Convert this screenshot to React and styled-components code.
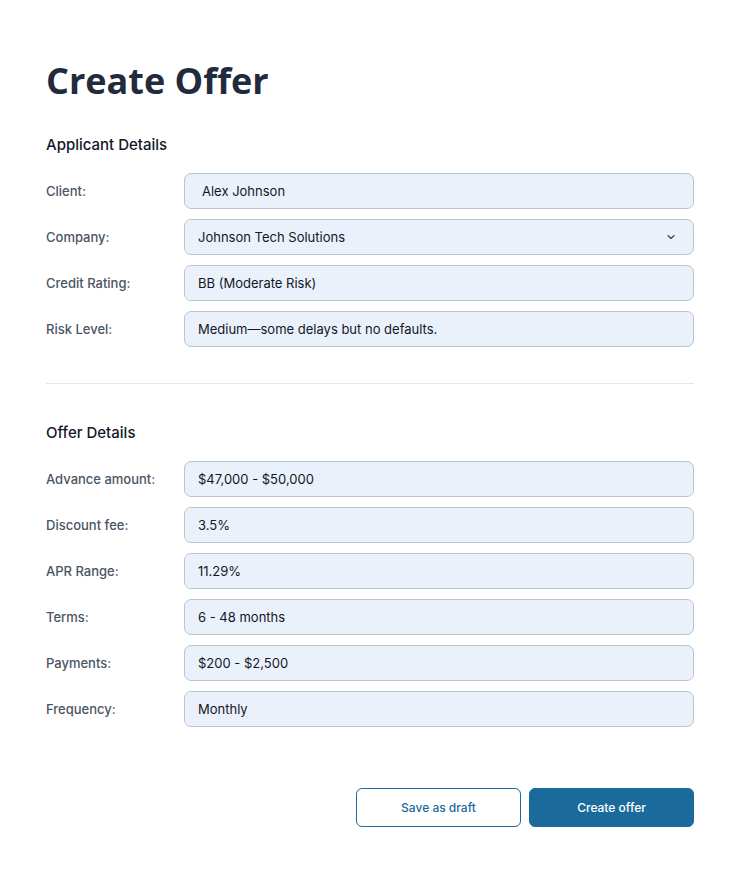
import styled, { createGlobalStyle } from 'styled-components';

const GlobalStyle = createGlobalStyle`
  * { box-sizing: border-box; }
  body {
    margin: 0;
    background: #ffffff;
    font-family: Inter, "Liberation Sans", sans-serif;
    color: #111827;
  }
`;

const Page = styled.div`
  width: 740px;
  padding: 56px 46px 40px 46px;
`;

const Title = styled.h1`
  margin: 0 0 29px 0;
  font-family: "Open Sans", sans-serif;
  font-size: 36px;
  font-weight: 700;
  line-height: 50px;
  color: #222b3d;
`;

const Section = styled.section`
  display: flex;
  flex-direction: column;
`;

const SectionTitle = styled.h2`
  margin: 0 0 18px 0;
  font-size: 15px;
  font-weight: 500;
  line-height: 20px;
  color: #111827;
`;

const Rows = styled.div`
  display: flex;
  flex-direction: column;
  gap: 10px;
`;

const Row = styled.div`
  display: grid;
  grid-template-columns: 138px 1fr;
  align-items: center;
`;

const Label = styled.label`
  font-size: 13px;
  font-weight: 500;
  color: #4b5563;
`;

const Field = styled.div`
  height: 36px;
  display: flex;
  align-items: center;
  justify-content: space-between;
  padding: 0 16px 0 ${(p) => (p.$inset ? 17 : 13)}px;
  background: #ebf1fa;
  border: 1px solid #b9c4d4;
  border-radius: 7px;
  font-size: 13px;
  color: #111827;
`;

const Divider = styled.hr`
  border: none;
  border-top: 1px solid #e5e7eb;
  margin: 36px 0 39px 0;
`;

const Actions = styled.div`
  display: flex;
  justify-content: flex-end;
  gap: 8px;
  margin-top: 61px;
`;

const Button = styled.button`
  width: 165px;
  height: 39px;
  border-radius: 6px;
  font-family: Inter, "Liberation Sans", sans-serif;
  font-size: 12px;
  font-weight: 500;
  cursor: pointer;
  border: 1px solid #1b6a9c;
  background: ${(p) => (p.$primary ? '#1b6a9c' : '#ffffff')};
  color: ${(p) => (p.$primary ? '#ffffff' : '#1b6a9c')};
`;

const Chevron = () => (
  <svg width="12" height="12" viewBox="0 0 24 24" fill="none" stroke="#374151" strokeWidth="2.2" strokeLinecap="round" strokeLinejoin="round">
    <polyline points="6 9 12 15 18 9" />
  </svg>
);

const applicant = [
  { label: 'Client:', value: 'Alex Johnson', inset: true },
  { label: 'Company:', value: 'Johnson Tech Solutions', select: true },
  { label: 'Credit Rating:', value: 'BB (Moderate Risk)' },
  { label: 'Risk Level:', value: 'Medium—some delays but no defaults.' },
];

const offer = [
  { label: 'Advance amount:', value: '$47,000 - $50,000' },
  { label: 'Discount fee:', value: '3.5%' },
  { label: 'APR Range:', value: '11.29%' },
  { label: 'Terms:', value: '6 - 48 months' },
  { label: 'Payments:', value: '$200 - $2,500' },
  { label: 'Frequency:', value: 'Monthly' },
];

function FieldRows({ items }) {
  return (
    <Rows>
      {items.map((item) => (
        <Row key={item.label}>
          <Label>{item.label}</Label>
          <Field $inset={item.inset}>
            <span>{item.value}</span>
            {item.select && <Chevron />}
          </Field>
        </Row>
      ))}
    </Rows>
  );
}

export default function App() {
  return (
    <Page>
      <GlobalStyle />
      <Title>Create Offer</Title>

      <Section>
        <SectionTitle>Applicant Details</SectionTitle>
        <FieldRows items={applicant} />
      </Section>

      <Divider />

      <Section>
        <SectionTitle>Offer Details</SectionTitle>
        <FieldRows items={offer} />
      </Section>

      <Actions>
        <Button>Save as draft</Button>
        <Button $primary>Create offer</Button>
      </Actions>
    </Page>
  );
}
